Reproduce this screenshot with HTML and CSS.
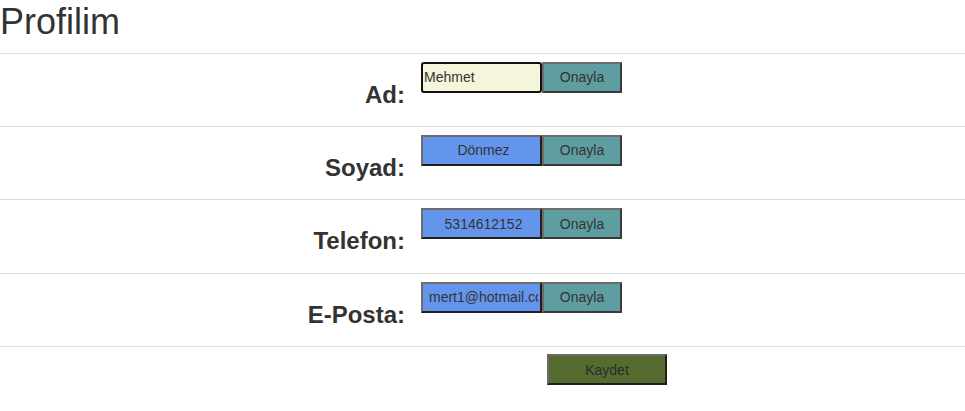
FILE: index.html
```html
<!DOCTYPE html>
<html lang="tr">
<head>
<meta charset="utf-8">
<title>Profilim</title>
<link rel="stylesheet" href="styles.css">
</head>
<body>
<h1 class="title">Profilim</h1>
<table class="profile">
  <colgroup><col class="col-label"><col></colgroup>
  <tr>
    <td class="label-cell"><h3 class="label">Ad:</h3></td>
    <td><div class="field"><input class="inp inp-focus" type="text" value="Mehmet"><button class="btn">Onayla</button></div></td>
  </tr>
  <tr>
    <td class="label-cell"><h3 class="label">Soyad:</h3></td>
    <td><div class="field"><input class="inp" type="text" value="Dönmez"><button class="btn">Onayla</button></div></td>
  </tr>
  <tr>
    <td class="label-cell"><h3 class="label">Telefon:</h3></td>
    <td><div class="field"><input class="inp" type="text" value="5314612152"><button class="btn">Onayla</button></div></td>
  </tr>
  <tr>
    <td class="label-cell"><h3 class="label">E-Posta:</h3></td>
    <td><div class="field"><input class="inp" type="text" value="mert1@hotmail.com"><button class="btn">Onayla</button></div></td>
  </tr>
  <tr>
    <td></td>
    <td><button class="btn save">Kaydet</button></td>
  </tr>
</table>
</body>
</html>
```
FILE: styles.css
```css
html, body {
  margin: 0;
  padding: 0;
  background: #fff;
}
body {
  font-family: "Liberation Sans", Arial, Helvetica, sans-serif;
  color: #333;
  font-size: 14px;
}
.title {
  font-size: 36px;
  font-weight: 500;
  line-height: 1.1;
  margin: 2px 0 11px 0;
}
.profile {
  width: 100%;
  border-collapse: collapse;
  table-layout: fixed;
}
.col-label {
  width: 413px;
}
.profile td {
  padding: 8px;
  border-top: 1px solid #ddd;
  vertical-align: top;
}
.label-cell {
  text-align: right;
}
.label {
  font-size: 24px;
  font-weight: bold;
  line-height: 1.1;
  margin: 20px 0 10px 0;
}
.field {
  display: flex;
}
.inp {
  box-sizing: border-box;
  width: 121px;
  height: 31px;
  margin: 0;
  padding: 1px 2px 1px 6px;
  font-family: "Liberation Sans", Arial, sans-serif;
  font-size: 14px;
  color: #333;
  text-align: center;
  background: #6495ed;
  border: 2px solid;
  border-color: #6d6d6d #1f1f1f #1f1f1f #6d6d6d;
  outline: none;
}
.inp-focus {
  text-align: left;
  padding: 1px 1px;
  background: #f5f5dc;
  border: 2px solid #111;
  border-radius: 3px;
}
.btn {
  box-sizing: border-box;
  width: 80px;
  height: 31px;
  margin: 0;
  padding: 1px 6px;
  font-family: "Liberation Sans", Arial, sans-serif;
  font-size: 14px;
  color: #333;
  background: #5f9ea0;
  border: 2px solid;
  border-color: #6d6d6d #3a3a3a #3a3a3a #6d6d6d;
}
.save {
  width: 120px;
  margin-left: 126px;
  margin-top: -1px;
  background: #556b2f;
  color: #2b2b2b;
  border-color: #6a6a6a #1f1f1f #1f1f1f #6a6a6a;
}
```
